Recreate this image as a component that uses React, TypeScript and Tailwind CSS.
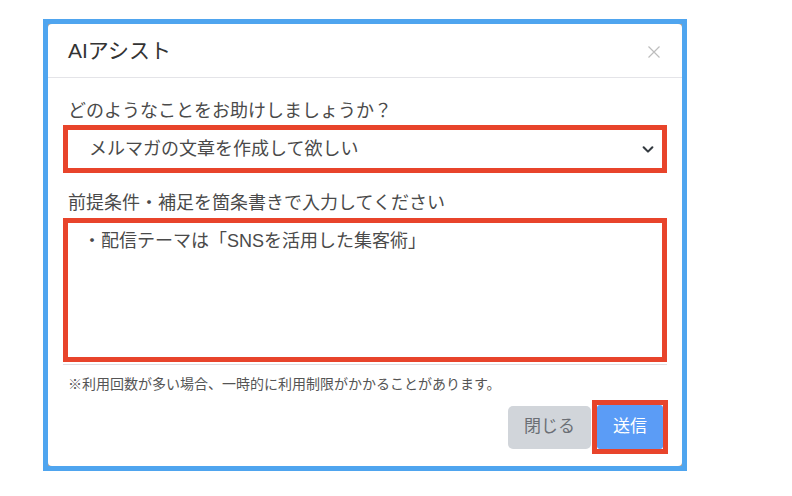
export default function App() {
  return (
    <div
      className="min-h-[496px] w-[792px] bg-white pl-[43px] pt-[19px]"
      style={{ fontFamily: '"Liberation Sans", "Noto Sans CJK JP", sans-serif' }}
    >
      {/* annotated modal */}
      <div className="w-[644px] border-[5px] border-[#4fa5ef] bg-[#a0a0a0]">
        <div className="flex flex-col rounded-[4px] bg-white">
          {/* Header */}
          <div className="flex h-[54px] items-center justify-between border-b border-[#e4e4e8] px-5">
            <h2 className="text-[21px] text-[#333333]">AIアシスト</h2>
            <button className="mr-[1px] mt-[2px] text-[#bdbdbd]">
              <svg width="14" height="14" viewBox="0 0 14 14" fill="none" stroke="currentColor" strokeWidth="1.2">
                <path d="M1.5 1.5l11 11M12.5 1.5l-11 11" />
              </svg>
            </button>
          </div>

          {/* Body */}
          <div className="px-5 pt-5 text-[18px] text-[#4a4a4a]">
            <p className="mb-[1px] leading-[26px]">どのようなことをお助けしましょうか？</p>
            <div className="-mx-[5px] border-[5px] border-[#e8442b]">
              <div className="flex h-[38px] items-center justify-between bg-white pl-[21px] pr-[7px]">
                <span>メルマガの文章を作成して欲しい</span>
                <svg width="14" height="14" viewBox="0 0 16 16" fill="none" stroke="#343a40" strokeWidth="2.4" strokeLinecap="round" strokeLinejoin="round">
                  <path d="M3 6l5 5 5-5" />
                </svg>
              </div>
            </div>

            <p className="mb-[2px] mt-[17px] leading-[26px]">前提条件・補足を箇条書きで入力してください</p>
            <div className="-mx-[5px] border-b border-[#dedee2] pb-[2px]">
              <div className="h-[144px] border-[5px] border-[#e8442b]">
                <div className="h-full bg-white pl-[15px] pt-[5px] leading-[26px]">
                  ・配信テーマは「SNSを活用した集客術」
                </div>
              </div>
            </div>

            <p className="mt-[10px] text-[14px] leading-[18px] text-[#555555]">
              ※利用回数が多い場合、一時的に利用制限がかかることがあります。
            </p>
          </div>

          {/* Footer */}
          <div className="flex items-center justify-end pb-[12px] pr-[14px] pt-[7px]">
            <button className="mr-[1px] h-[43px] w-[83px] rounded-[5px] bg-[#d1d5da] text-[17px] text-[#6b6f75]">
              閉じる
            </button>
            <div className="border-[5px] border-[#e8442b]">
              <button className="h-[44px] w-[66px] rounded-[3px] bg-[#5b9cf6] text-[17px] text-white">
                送信
              </button>
            </div>
          </div>
        </div>
      </div>
    </div>
  )
}
